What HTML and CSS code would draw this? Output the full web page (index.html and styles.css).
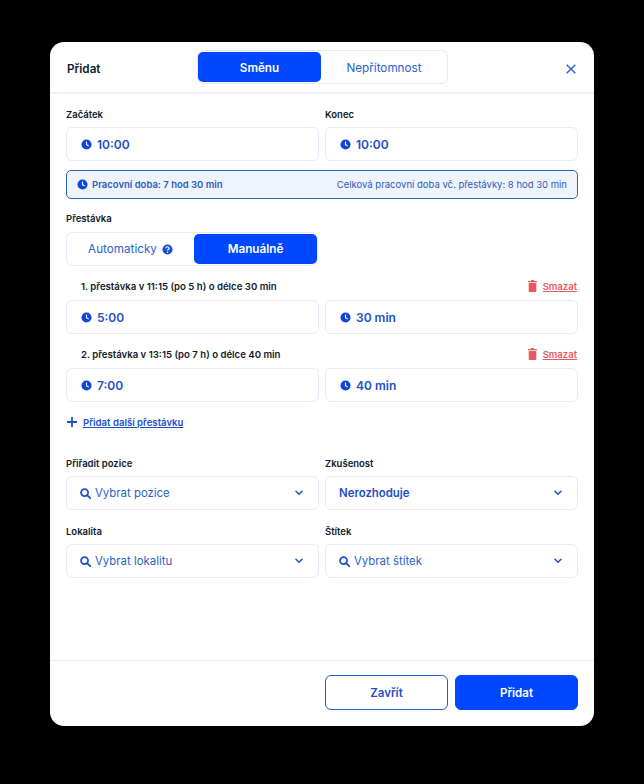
FILE: index.html
```html
<!DOCTYPE html>
<html lang="cs">
<head>
  <meta charset="UTF-8">
  <title>Přidat</title>
  <link rel="stylesheet" href="styles.css">
</head>
<body>

<svg class="defs" width="0" height="0">
  <symbol id="clock" viewBox="0 0 12 12">
    <circle cx="6" cy="6" r="5.5" fill="currentColor"/>
    <path d="M6 2.8V6.3L8.4 7.6" fill="none" stroke="#fff" stroke-width="1.2"/>
  </symbol>
  <symbol id="search" viewBox="0 0 14 14">
    <circle cx="5.8" cy="5.8" r="4.5" fill="none" stroke="currentColor" stroke-width="2.2"/>
    <path d="M9 9L13 13" stroke="currentColor" stroke-width="2.3" stroke-linecap="round"/>
  </symbol>
  <symbol id="chevron" viewBox="0 0 8 6">
    <path d="M1 1.3L4 4.3L7 1.3" fill="none" stroke="currentColor" stroke-width="1.5" stroke-linecap="round"/>
  </symbol>
  <symbol id="trash" viewBox="0 0 9 12">
    <path d="M3 0H6V1H9V2.3H0V1H3Z" fill="currentColor"/>
    <path d="M.7 3H8.3V11A1 1 0 0 1 7.3 12H1.7A1 1 0 0 1 .7 11Z" fill="currentColor"/>
  </symbol>
</svg>

<div class="modal">
  <!-- Cabecera -->
  <div class="modal-head">
    <div class="modal-title">Přidat</div>
    <div class="segment segment-top">
      <div class="segment-item active">Směnu</div>
      <div class="segment-item">Nepřítomnost</div>
    </div>
    <svg class="close" width="10" height="10" viewBox="0 0 10 10">
      <path d="M.7 .7L9.3 9.3M9.3 .7L.7 9.3" stroke="currentColor" stroke-width="1.4"/>
    </svg>
  </div>

  <div class="modal-body">
    <div class="grid">
      <div class="col">
        <div class="label">Začátek</div>
        <div class="field"><svg class="ico-clock"><use href="#clock"/></svg>10:00</div>
      </div>
      <div class="col">
        <div class="label">Konec</div>
        <div class="field"><svg class="ico-clock"><use href="#clock"/></svg>10:00</div>
      </div>
    </div>

    <div class="info">
      <div class="info-left"><svg class="ico-clock"><use href="#clock"/></svg>Pracovní doba: 7 hod 30 min</div>
      <div class="info-right">Celková pracovní doba vč. přestávky: 8 hod 30 min</div>
    </div>

    <div class="label label-break">Přestávka</div>
    <div class="segment segment-break">
      <div class="segment-item">Automaticky
        <svg class="help" width="11" height="11" viewBox="0 0 12 12">
          <circle cx="6" cy="6" r="5.5" fill="currentColor"/>
          <path d="M4.2 4.7C4.2 2.4 7.8 2.5 7.8 4.6C7.8 6 6 5.9 6 7.2" fill="none" stroke="#fff" stroke-width="1.3"/>
          <circle cx="6" cy="9" r=".8" fill="#fff"/>
        </svg>
      </div>
      <div class="segment-item active">Manuálně</div>
    </div>

    <div class="break-head">
      <span>1. přestávka v 11:15 (po 5 h) o délce 30 min</span>
      <a class="delete"><svg width="9" height="12"><use href="#trash"/></svg><u>Smazat</u></a>
    </div>
    <div class="grid">
      <div class="field"><svg class="ico-clock"><use href="#clock"/></svg>5:00</div>
      <div class="field"><svg class="ico-clock"><use href="#clock"/></svg>30 min</div>
    </div>

    <div class="break-head">
      <span>2. přestávka v 13:15 (po 7 h) o délce 40 min</span>
      <a class="delete"><svg width="9" height="12"><use href="#trash"/></svg><u>Smazat</u></a>
    </div>
    <div class="grid">
      <div class="field"><svg class="ico-clock"><use href="#clock"/></svg>7:00</div>
      <div class="field"><svg class="ico-clock"><use href="#clock"/></svg>40 min</div>
    </div>

    <a class="add-break">
      <svg width="10" height="10" viewBox="0 0 10 10"><path d="M5 0V10M0 5H10" stroke="currentColor" stroke-width="1.8"/></svg>
      <u>Přidat další přestávku</u>
    </a>

    <div class="grid grid-select">
      <div class="col">
        <div class="label">Přiřadit pozice</div>
        <div class="field select"><svg class="ico-search"><use href="#search"/></svg><span class="placeholder">Vybrat pozice</span><svg class="ico-chevron"><use href="#chevron"/></svg></div>
      </div>
      <div class="col">
        <div class="label">Zkušenost</div>
        <div class="field select"><span class="value">Nerozhoduje</span><svg class="ico-chevron"><use href="#chevron"/></svg></div>
      </div>
      <div class="col">
        <div class="label">Lokalita</div>
        <div class="field select"><svg class="ico-search"><use href="#search"/></svg><span class="placeholder">Vybrat lokalitu</span><svg class="ico-chevron"><use href="#chevron"/></svg></div>
      </div>
      <div class="col">
        <div class="label">Štítek</div>
        <div class="field select"><svg class="ico-search"><use href="#search"/></svg><span class="placeholder">Vybrat štítek</span><svg class="ico-chevron"><use href="#chevron"/></svg></div>
      </div>
    </div>
  </div>

  <div class="modal-foot">
    <button class="btn btn-outline">Zavřít</button>
    <button class="btn btn-primary">Přidat</button>
  </div>
</div>

</body>
</html>
```

FILE: styles.css
```css
* {
  box-sizing: border-box;
}

body {
  margin: 0;
  height: 784px;
  background: black;
  overflow: hidden;
  padding: 42px 50px 58px;
  font-family: Inter, "Liberation Sans", sans-serif;
  color: #0f1a2c;
}

.defs {
  display: block;
  height: 0;
}

.modal {
  height: 684px;
  background: white;
  border-radius: 14px;
  display: flex;
  flex-direction: column;
}

.modal-head {
  height: 52px;
  padding: 8px 18px 0 17px;
  display: flex;
  border-bottom: 2px solid #eef0f8;
}

.modal-title {
  width: 130px;
  font-size: 11.7px;
  font-weight: 600;
  line-height: 38px;
}

.close {
  margin: 14px 0 0 auto;
  color: #2a62c9;
}

.segment {
  display: flex;
  background: white;
  border: 1px solid #e6eaf7;
  border-radius: 6px;
  height: 34px;
  padding: 1px 0;
}

.segment-top {
  width: 251px;
}

.segment-top .segment-item {
  padding-top: 1px;
}

.segment-break {
  width: 252px;
  margin-top: 6px;
}

.segment-item {
  flex: 1;
  display: flex;
  align-items: center;
  justify-content: center;
  gap: 5px;
  font-size: 11.7px;
  font-weight: 400;
  color: #2a62c9;
  border-radius: 5px;
}

.segment-item.active {
  flex: 0 0 123px;
  background: #0048ff;
  color: white;
  font-weight: 600;
}

.help {
  color: #1250d8;
}

.modal-body {
  flex: 1;
  padding: 13px 16px 0;
}

.grid {
  display: grid;
  grid-template-columns: 253px 253px;
  gap: 6px;
}

.label {
  font-size: 9.5px;
  font-weight: 600;
  line-height: 16px;
  margin-bottom: 4px;
}

.field {
  height: 34px;
  display: flex;
  align-items: center;
  gap: 5px;
  padding-left: 14px;
  background: white;
  border: 1px solid #e6eaf7;
  border-radius: 6px;
  font-size: 12px;
  font-weight: 600;
  color: #1d4fc7;
}

.ico-clock {
  width: 11px;
  height: 11px;
  color: #0f46d6;
}

.info {
  height: 29px;
  margin-top: 9px;
  padding: 0 10px;
  display: flex;
  align-items: center;
  justify-content: space-between;
  background: #eff3fc;
  border: 1.5px solid #2a64b8;
  border-radius: 5px;
  font-size: 9.5px;
  color: #2a5cbe;
}

.info-left {
  display: flex;
  align-items: center;
  gap: 4px;
  font-weight: 600;
}

.label-break {
  margin: 12px 0 0;
}

.segment-break {
  margin-top: 5px;
}

.break-head {
  display: flex;
  justify-content: space-between;
  align-items: center;
  height: 16px;
  margin: 12px 0 6px;
  padding: 0 1px 0 15px;
  font-size: 9.6px;
  font-weight: 600;
}

.delete {
  display: flex;
  align-items: center;
  gap: 6px;
  color: #e8595f;
  font-size: 9.5px;
  font-weight: 600;
}

.add-break {
  display: flex;
  align-items: center;
  gap: 6px;
  height: 16px;
  margin-top: 12px;
  padding-left: 1px;
  font-size: 9.6px;
  font-weight: 600;
  color: #1d4fc7;
}

.grid-select {
  margin-top: 26px;
  row-gap: 14px;
}

.select {
  gap: 4px;
  padding-left: 13px;
  padding-right: 15px;
  font-size: 11.4px;
}

.ico-search {
  width: 11px;
  height: 11px;
  color: #1d4fc7;
}

.ico-chevron {
  width: 8px;
  height: 6px;
  margin-left: auto;
  color: #1d4fc7;
}

.placeholder {
  font-weight: 400;
  color: #2a62c9;
}

.value {
  font-weight: 600;
}

.modal-foot {
  height: 66px;
  padding: 14px 16px 0;
  border-top: 1px solid #e9ecf5;
  display: flex;
  justify-content: flex-end;
  gap: 7px;
}

.btn {
  width: 123px;
  height: 35px;
  border-radius: 6px;
  font-family: inherit;
  font-size: 11.5px;
  font-weight: 600;
}

.btn-outline {
  background: white;
  border: 1px solid #2060c0;
  color: #1d4fc7;
}

.btn-primary {
  background: #0048ff;
  border: 1px solid #0048ff;
  color: white;
}
```
